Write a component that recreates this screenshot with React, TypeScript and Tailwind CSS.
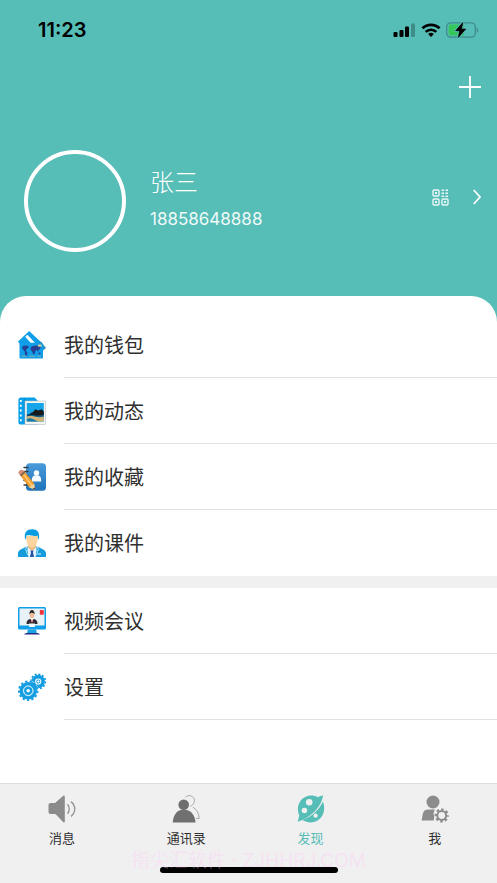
import type { ReactNode } from 'react'

function SignalIcon() {
  return (
    <svg width="23" height="14" viewBox="0 0 23 14" aria-hidden="true">
      <rect x="0.5" y="9" width="4" height="5" rx="1" />
      <rect x="6.5" y="7" width="4" height="7" rx="1" />
      <rect x="12" y="3.5" width="4" height="10.5" rx="1" />
      <rect x="18" y="0.5" width="4" height="13.5" rx="1" fill="#3f8d89" />
    </svg>
  )
}

function WifiIcon() {
  return (
    <svg width="20" height="14" viewBox="0 0 20 14" aria-hidden="true">
      <g fill="none" stroke="#000" strokeWidth="2.7">
        <path d="M1.4 5.3a12.3 12.3 0 0 1 17.2 0" />
        <path d="M4.7 8.9a7.6 7.6 0 0 1 10.6 0" />
      </g>
      <path d="M10 14l-2.9-2.9a4.1 4.1 0 0 1 5.8 0z" />
    </svg>
  )
}

function BatteryIcon() {
  return (
    <svg width="33" height="16" viewBox="0 0 33 16" aria-hidden="true">
      <rect x="0.7" y="0.9" width="28.6" height="14.2" rx="4" fill="none" stroke="#3f8d89" strokeWidth="1.3" />
      <path d="M30.7 5.4c2 .8 2 4.4 0 5.2z" fill="#3f8d89" />
      <path d="M5 2.600h13v10.800H5a2.400 2.400 0 0 1-2.400-2.400V5A2.400 2.400 0 0 1 5 2.600z" fill="#35c759" />
      <path
        d="M16.8.6L9.7 8.700h4.100l-1.500 6.700 7.400-8.400h-4.200z"
        stroke="#56bdb7"
        strokeWidth="2.6"
        paintOrder="stroke"
        strokeLinejoin="round"
      />
      <path d="M16.8.6L9.7 8.700h4.100l-1.500 6.700 7.400-8.400h-4.200z" stroke="#000" strokeWidth="0.6" />
    </svg>
  )
}

function PlusIcon() {
  return (
    <svg width="22" height="22" viewBox="0 0 22 22" aria-hidden="true">
      <path d="M11 0v22M0 11h22" stroke="#fff" strokeWidth="1.8" />
    </svg>
  )
}

function QrIcon() {
  return (
    <svg width="17" height="17" viewBox="0 0 17 17" aria-hidden="true">
      <g fill="none" stroke="#e9f6f5" strokeWidth="1.4">
        <rect x="1" y="1" width="6" height="6" rx="1" />
        <rect x="1" y="10" width="6" height="6" rx="1" />
        <rect x="10" y="10" width="6" height="6" rx="1" />
        <path d="M9.500 1.200h2.600M13.400 1.200H16M9.500 4.200h2.600M13.400 4.200H16M9.500 7.200h2.600M13.400 7.200H16" />
      </g>
      <g fill="#e9f6f5">
        <rect x="3" y="3" width="2" height="2" />
        <rect x="3" y="12" width="2" height="2" />
        <rect x="12" y="12" width="2" height="2" />
      </g>
    </svg>
  )
}

function WalletIcon() {
  return (
    <svg width="28" height="28" viewBox="0 0 28 28" aria-hidden="true">
      <path d="M11.200 0L24 12l-2 3H3L0 10.500z" fill="#0f9fe8" />
      <path d="M7.200 5.800l2.200-2 7.500 8h-4.300z" fill="#fff" />
      <path d="M21 11.300l2.200-.6 4.800 6.300-4 3.600z" fill="#2d8fc8" />
      <rect x="1.5" y="12.800" width="23.500" height="14.700" rx="0.8" fill="#109eea" />
      <path
        d="M4 15.400l3.600-1 3.400.8-1.200 2.400-1.800.8.4 2 1.200 1.600-1.200 3.400-1.400-1.800-.2-3-2.200-2.600zM12.600 16.800l1.400-1.600 4-.8 4 .8.8 1.600-1.600 1.800-1.200 2.200-1.200-2-1.200.6-.8 3-1.600 1-1-3-1.400-1.200zM20.600 21.400l2 .4-.4 1.600-1.800-.4z"
        fill="#263f91"
      />
      <rect x="20" y="13.600" width="3.600" height="2.200" rx="0.400" fill="#d3c793" />
      <path d="M3.600 25.200h5M11 25.200h6M19 25.200h4" stroke="#8fb5a0" strokeWidth="0.900" />
    </svg>
  )
}

function MomentsIcon() {
  return (
    <svg width="28" height="28" viewBox="0 0 28 28" aria-hidden="true">
      <path d="M3 .5h13.600L20 4v23.500H3a2.600 2.600 0 0 1-2.600-2.600V3.100A2.600 2.600 0 0 1 3 .5z" fill="#079fe9" />
      <path d="M2.800 3v23" stroke="#fff" strokeWidth="1.8" strokeDasharray="2 2.800" />
      <path d="M6.500 1v26" stroke="#0a7fc9" strokeWidth="0.7" />
      <rect x="7" y="4" width="20.500" height="23.500" fill="#f4f5f5" stroke="#b9bfc3" strokeWidth="0.6" />
      <rect x="8.800" y="6" width="17" height="18.600" fill="#16a5e8" />
      <rect x="8.800" y="17" width="17" height="4" fill="#0c5f8f" />
      <path d="M8.800 19.500c5-2.500 10 2.500 17 0v5.100h-17z" fill="#d3b477" />
      <path d="M8.800 22c4-2 8 1 11 2.600h-11z" fill="#177aa7" />
      <path d="M10 19l3.200-3.300 2-.7 2-2.700 3 1.200 3.600-1.200 2 2.200v3.500l-7 .8-5-1z" fill="#17191b" />
    </svg>
  )
}

function FavoritesIcon() {
  return (
    <svg width="28" height="28" viewBox="0 0 28 28" aria-hidden="true">
      <defs>
        <linearGradient id="book" x2="0" y2="1">
          <stop stopColor="#4b9bda" />
          <stop offset="1" stopColor="#1e73ba" />
        </linearGradient>
      </defs>
      <rect x="8" y="0.300" width="20" height="27.400" rx="3.500" fill="url(#book)" />
      <path d="M6 4.500h4M6 8.500h4M6 13h4M6 17.500h4M6 22h4" stroke="#353b42" strokeWidth="1.400" strokeLinecap="round" />
      <circle cx="18.500" cy="10" r="2.700" fill="#fff" />
      <path d="M13.800 18.600c0-6 2-6.400 4.700-6.400s4.700.4 4.700 6.400z" fill="#f5faff" />
      <path d="M.6 10.200c-.8-2 2.400-4.500 4.200-3.100L6.700 9 2.600 12.700z" fill="#dc8e78" />
      <path d="M2.100 12.200L6.500 8.400l9.700 12.400.7 6-5.800-2.600z" fill="#f3a02f" />
      <path d="M4.600 10.200l9.400 12.500" stroke="#ffd287" strokeWidth="1.200" />
      <path d="M1.800 11.900l4.500-3.800 1.200 1.500-4.400 3.900z" fill="#846851" />
      <path d="M11.100 24.200l5.100-3.400.7 6z" fill="#f3d5a4" />
      <path d="M14.600 25.800l2-1.200.3 2.200z" fill="#38312c" />
    </svg>
  )
}

function CoursewareIcon() {
  return (
    <svg width="28" height="28" viewBox="0 0 28 28" aria-hidden="true">
      <path d="M10 16h8v6l-4 4-4-4z" fill="#f3bd7d" />
      <path d="M8 7h12l-.5 4.500c-.4 4-3 6.800-5.500 6.800s-5.100-2.800-5.500-6.800z" fill="#fbd5a0" />
      <path d="M6.900 9C6.200 3.500 9 .2 14.200.2S21.600 3 21.100 9l-.9 1.800-.6-4.300c-3.600 1.500-7.600-.8-11.200 0l-.6 4.300z" fill="#079be0" />
      <path d="M0 28v-4c0-3 5.500-5 9.400-6.500L14 23l4.600-5.500C22.500 19 28 21 28 24v4z" fill="#159cdd" />
      <path d="M9.300 18l4.700 4 4.700-4-1 10h-7.400z" fill="#e7f6ff" />
      <path d="M12.400 21.400h3.200l-.6 2 1 4.600h-4l1-4.600z" fill="#2452a6" />
      <path d="M9.200 17.500l-2 3.300 2 1-1 1.200 3 5M18.800 17.500l2 3.300-2 1 1 1.200-3 5" fill="none" stroke="#b8e7fb" strokeWidth="0.9" />
      <path d="M19.500 25h3.500" stroke="#fff" strokeWidth="0.9" />
    </svg>
  )
}

function MeetingIcon() {
  return (
    <svg width="28" height="28" viewBox="0 0 28 28" aria-hidden="true">
      <rect width="28" height="22.500" rx="1.500" fill="#119ee8" />
      <rect x="1.500" y="1.500" width="25" height="17" fill="#e8f1f5" />
      <path d="M8.500 17c0-4.500 2.800-5.300 5.500-5.300s5.500.8 5.500 5.300z" fill="#302b32" />
      <path d="M12.200 11l1.800 4.700 1.800-4.700z" fill="#fff" />
      <ellipse cx="14" cy="8" rx="2.300" ry="3.300" fill="#efba9a" />
      <path d="M11.400 7.500c-.5-6 5.700-6 5.200 0-.7-2-4-2.700-5.200 0z" fill="#292427" />
      <path d="M14 12.500v3" stroke="#d43538" strokeWidth="0.9" />
      <rect x="21.800" y="3" width="4" height="4.800" rx="0.800" fill="#ee343d" />
      <rect x="11.200" y="16.500" width="5.600" height="3.500" fill="#f7fbfd" />
      <path d="M9.800 22.500h8.400l.7 4.500H9z" fill="#18a2e3" />
      <path d="M6.200 27.400c0-1 2.500-1.400 4-1.400h7.600c1.500 0 4 .4 4 1.400z" fill="#252e83" />
    </svg>
  )
}

function SettingsIcon() {
  return (
    <svg width="28" height="28" viewBox="0 0 28 28" aria-hidden="true">
      <g fill="none" stroke="#159de2">
        <circle cx="20.200" cy="8.500" r="7.200" strokeWidth="1.800" strokeDasharray="1.900 1.870" />
        <circle cx="20.200" cy="8.500" r="4.900" strokeWidth="3.600" />
        <circle cx="20.200" cy="8.500" r="1.600" strokeWidth="1" />
        <circle cx="10.200" cy="17.800" r="10.200" stroke="#fff" strokeWidth="0.6" />
        <circle cx="10.200" cy="17.800" r="9.300" strokeWidth="1.900" strokeDasharray="2.250 2.245" />
        <circle cx="10.200" cy="17.800" r="6.600" strokeWidth="4.400" />
        <circle cx="10.200" cy="17.800" r="3" strokeWidth="2.400" />
        <circle cx="10.200" cy="17.800" r="4.900" stroke="#e7f8ff" strokeWidth="0.9" />
      </g>
    </svg>
  )
}

function SpeakerIcon() {
  return (
    <svg width="28" height="28" viewBox="0 0 28 28" aria-hidden="true">
      <path d="M2.500 8H7l8.300-7.200c.7-.6 1.500-.3 1.500.6v25.200c0 .9-.8 1.200-1.500.6L9 20.400c-1-1-1.600-1.400-3-1.400H2.500A2 2 0 0 1 .5 17v-7a2 2 0 0 1 2-2z" fill="#8b8b8b" />
      <path d="M19.500 9.200c2.300 2.700 2.300 6.900 0 9.600M23 6.600c5 4.200 5 10.600 0 14.800" fill="none" stroke="#969696" strokeWidth="1.400" />
    </svg>
  )
}

function ContactsIcon() {
  return (
    <svg width="28" height="28" viewBox="0 0 28 28" aria-hidden="true">
      <g fill="none" stroke="#a0a0a0" strokeWidth="0.9">
        <path d="M13.300 2.300C16-.4 21 .2 22.200 4c.9 3-.8 5.800-3.800 7.200" />
        <path d="M20.800 12.200c4 2 6.200 6 6.400 11.300h-3" />
      </g>
      <circle cx="11.700" cy="9.800" r="5.300" fill="#6e6e6e" />
      <path d="M.7 27.500C1.100 20.500 5 15 9.500 15h4.400c5 0 9.200 5.500 9.600 12.500z" fill="#707070" />
    </svg>
  )
}

function DiscoverIcon() {
  return (
    <svg width="28" height="28" viewBox="0 0 28 28" aria-hidden="true">
      <path
        fillRule="evenodd"
        d="M.7 26.800l1.600-6.300C-2 11 4 .8 14 .6c3 0 5 .6 7 1.600 2-.9 3.500-1.300 5.200-1.600C25 7 22 12 18 16.200 12.500 21.300 7 24.600.7 26.800zM12.200 3.900a3.300 3.300 0 1 0 0 6.600 3.300 3.300 0 0 0 0-6.600zM7.400 12.700a2.800 2.800 0 1 0 0 5.600 2.800 2.800 0 0 0 0-5.600z"
        fill="#56bdb7"
      />
      <path
        fillRule="evenodd"
        d="M25.900 6.500C30 16.500 24 27.400 14 27.400c-3.300 0-6-.8-8.700-2.300C15.500 21 22 15 25.900 6.500zM18.600 18.600a2.100 2.100 0 1 0 0 4.200 2.100 2.100 0 0 0 0-4.200z"
        fill="#56bdb7"
      />
    </svg>
  )
}

function ProfileIcon() {
  return (
    <svg width="28" height="28" viewBox="0 0 28 28" aria-hidden="true">
      <circle cx="12" cy="7" r="6.500" fill="#8c8c8c" />
      <path d="M.6 25.500l1.200-6.500c.6-3.200 2.300-4.500 5.500-4.500h6.500l-1.300 4 .7 3-.4 4z" fill="#8c8c8c" />
      <circle cx="20.700" cy="20.500" r="4.400" fill="none" stroke="#8c8c8c" strokeWidth="2" />
      <circle cx="20.700" cy="20.500" r="6" fill="none" stroke="#8c8c8c" strokeWidth="2.200" strokeDasharray="2.500 2.212" strokeDashoffset="1.250" />
    </svg>
  )
}

const personalItems = [
  { label: '我的钱包', icon: <WalletIcon /> },
  { label: '我的动态', icon: <MomentsIcon /> },
  { label: '我的收藏', icon: <FavoritesIcon /> },
  { label: '我的课件', icon: <CoursewareIcon /> },
]

const toolItems = [
  { label: '视频会议', icon: <MeetingIcon /> },
  { label: '设置', icon: <SettingsIcon /> },
]

const tabs = [
  { label: '消息', icon: <SpeakerIcon /> },
  { label: '通讯录', icon: <ContactsIcon /> },
  { label: '发现', icon: <DiscoverIcon />, active: true },
  { label: '我', icon: <ProfileIcon /> },
]

function MenuRow({ label, icon, divider = true }: { label: string; icon: ReactNode; divider?: boolean }) {
  return (
    <li className="flex pl-[18px]">
      <a href="#" className="flex flex-1 items-center gap-[18px] text-xl text-[#303030]">
        <span className="w-7">{icon}</span>
        <span className={`flex h-[66px] flex-1 items-center pt-0.5 ${divider ? 'border-b border-[#e2e2e2]' : ''}`}>
          {label}
        </span>
      </a>
    </li>
  )
}

export default function App() {
  return (
    <div className="flex min-h-screen flex-col bg-[#56bdb7] font-['Inter','Noto_Sans_CJK_SC',sans-serif]">
      <header className="text-white">
        <div className="flex h-[60px] items-center justify-between pr-[18px] pl-[38px] text-black">
          <time className="text-xl font-semibold">11:23</time>
          <div className="flex items-center gap-[5px]">
            <SignalIcon />
            <WifiIcon />
            <BatteryIcon />
          </div>
        </div>
        <div className="flex h-[54px] items-center justify-end px-4">
          <button type="button" aria-label="添加">
            <PlusIcon />
          </button>
        </div>
        <div className="flex items-center pt-9 pr-4 pb-11 pl-6">
          <div className="size-[102px] rounded-full border-4 border-white" />
          <div className="ml-6 flex-1">
            <h1 className="text-2xl leading-9 font-light">张三</h1>
            <p className="text-[17px] leading-9 text-[#f0faf9]">18858648888</p>
          </div>
          <button type="button" aria-label="二维码" className="mb-2">
            <QrIcon />
          </button>
          <button type="button" aria-label="个人资料" className="mb-2 ml-6">
            <svg width="8" height="16" viewBox="0 0 8 16" aria-hidden="true">
              <path d="M0.700 1l6.300 7-6.300 7" fill="none" stroke="#fff" strokeWidth="1.700" />
            </svg>
          </button>
        </div>
      </header>

      <main className="flex-1 rounded-t-[26px] bg-white pt-4">
        <ul>
          {personalItems.map((item, i) => (
            <MenuRow key={item.label} {...item} divider={i < personalItems.length - 1} />
          ))}
        </ul>
        <div className="h-3 bg-[#f0f0f0]" />
        <ul>
          {toolItems.map((item) => (
            <MenuRow key={item.label} {...item} />
          ))}
        </ul>
      </main>

      <footer className="relative border-t border-[#dedede] bg-[#f0f0f0]">
        <nav className="grid h-[99px] grid-cols-4 items-start pt-[11px]">
          {tabs.map((tab) => (
            <a
              key={tab.label}
              href="#"
              className={`flex flex-col items-center gap-[5px] text-[13px] leading-5 ${tab.active ? 'text-[#56bdb7]' : 'text-[#303030]'}`}
            >
              {tab.icon}
              {tab.label}
            </a>
          ))}
        </nav>
        <div className="absolute inset-x-0 bottom-[10px] mx-auto h-[6px] w-[178px] rounded-full bg-black" />
        <p className="absolute inset-x-0 bottom-[10px] text-center text-[19px] leading-6 text-[#ffc8fa]/35">
          指尖汇软件 · ZJHHRJ.COM
        </p>
      </footer>
    </div>
  )
}
